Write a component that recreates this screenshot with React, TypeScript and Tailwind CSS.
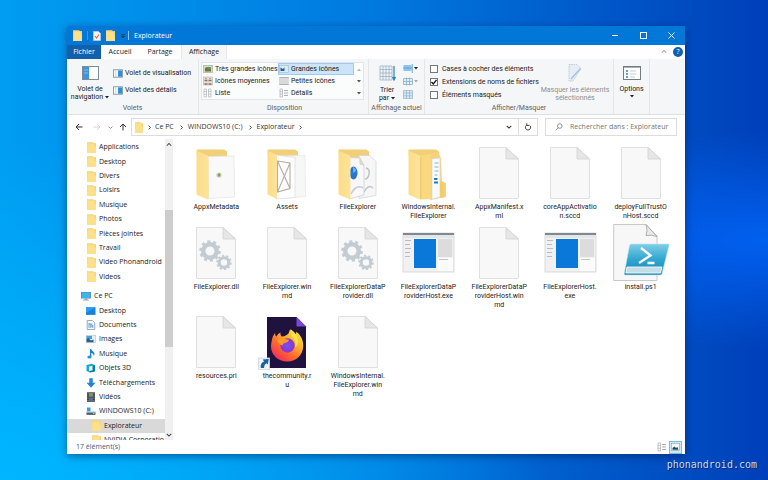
import React from "react";

type IconProps = { className?: string };

/* ---------- small icons ---------- */

const MiniFolder = ({ className = "h-[11px] w-[9px]" }: IconProps) => (
  <svg viewBox="0 0 9 11" className={`shrink-0 ${className}`} preserveAspectRatio="none" aria-hidden="true">
    <path d="M0 .3h6l1 1h2v9.700H0z" fill="#f3d479" />
    <path d="M.5 1.500h8.500v9.500H0z" fill="#fde08a" />
    <path d="M7.600 1.300h1.100v4h-1.100z" fill="#f7cf68" />
  </svg>
);

const Chevron = ({ dir, className = "size-[5px]" }: IconProps & { dir: "up" | "down" | "right" }) => {
  const d = { up: "M1 5l3-3 3 3", down: "M1 2.5l3 3 3-3", right: "M2.5 1l3 3-3 3" }[dir];
  return (
    <svg viewBox="0 0 8 8" className={`shrink-0 ${className}`} fill="none" stroke="currentColor" strokeWidth="1.4" aria-hidden="true">
      <path d={d} />
    </svg>
  );
};

const Caret = ({ className = "" }: IconProps) => (
  <svg viewBox="0 0 4 3" className={`h-[3px] w-1 shrink-0 ${className}`} aria-hidden="true">
    <path d="M0 0h4L2 2.6z" fill="currentColor" />
  </svg>
);

const PaneIcon = () => (
  <svg viewBox="0 0 10 9" className="h-[9px] w-[10px] shrink-0" aria-hidden="true">
    <rect x=".5" y=".8" width="9" height="7.4" fill="#fff" stroke="#6f8ba0" strokeWidth=".8" />
    <rect x="5" y="1.4" width="4" height="6.3" fill="#2f8fdc" />
    <path d="M2.8 1.2v6.6" stroke="#9fb4c3" strokeWidth=".6" />
  </svg>
);

type ViewKind = "xl" | "large" | "medium" | "small" | "list" | "details";

const ViewIcon = ({ kind }: { kind: ViewKind }) => (
  <svg viewBox="0 0 10 10" className="size-[10px] shrink-0" aria-hidden="true">
    {kind === "xl" && (
      <>
        <rect x=".5" y="1.5" width="9" height="7" fill="#d3dcc0" stroke="#aab0a6" strokeWidth=".7" />
        <path d="M2 7.5V4l2-1 2 1 2-1v4.500z" fill="#7d7238" />
        <path d="M5 3h3v2H5z" fill="#4c9a86" />
      </>
    )}
    {kind === "large" && (
      <>
        <rect x=".5" y="1.500" width="9" height="7" fill="#d9e9f7" stroke="#9cb9d2" strokeWidth=".6" />
        <path d="M1.500 7V3.500l2.400 1.500L5.500 3.500V7z" fill="#2f5f88" />
      </>
    )}
    {kind === "medium" && (
      <>
        <rect x=".5" y="1" width="9" height="8" fill="#e8e1dc" stroke="#b8b0aa" strokeWidth=".6" />
        <path d="M1.500 4.500h3M5.500 4.500h3M1.500 8h3M5.500 8h3" stroke="#8d7468" strokeWidth="1.400" />
        <path d="M2 2.600h2M6 2.600h2" stroke="#c79a75" />
      </>
    )}
    {kind === "small" && <path d="M1 1v8M3 1v8M5 1v8M7 1v8M9 1v8M.5 1.500h9M.5 8.500h9" stroke="#a5a5a5" strokeWidth=".8" />}
    {kind === "list" && (
      <path d="M1 1h2.500v8H1zM5.500 1H8v8H5.500zM1 3.500h2.500M1 6.200h2.500M5.500 3.500H8M5.500 6.200H8" fill="none" stroke="#b0b4b8" strokeWidth=".7" />
    )}
    {kind === "details" && (
      <>
        <path d="M1 1h2.500v8H1zM1 3.600h2.500M1 6.200h2.500" fill="none" stroke="#a9adb2" strokeWidth=".7" />
        <path d="M5 2.500h4M5 5h4M5 7.500h4" stroke="#999" strokeWidth=".8" />
      </>
    )}
  </svg>
);

const TreeIcon = ({ kind }: { kind: string }) => (
  <svg viewBox="0 0 10 10" className="size-[10px] shrink-0" aria-hidden="true">
    {kind === "pc" && (
      <>
        <rect x="0" y="1" width="10" height="6.500" fill="#5a8fb4" />
        <rect x=".7" y="1.600" width="8.600" height="5.300" fill="#3db4f0" />
        <path d="M3.500 7.500h3v1.200H8V9.500H2v-.8h1.500z" fill="#8ba6b8" />
      </>
    )}
    {kind === "desktop" && (
      <>
        <rect y="1.300" width="9.500" height="7.600" fill="#1583dd" />
        <path d="M0 1.300h9.500L0 7z" fill="#2c9cf0" />
      </>
    )}
    {kind === "doc" && (
      <>
        <path d="M1.200.5H6.500L8.800 2.800V9.500H1.200z" fill="#f5fafd" stroke="#7f99ab" strokeWidth=".8" />
        <path d="M3 3v5M4.800 4v4M3 4h3.500M4.500 6h2.500M6.800 5v3" stroke="#4b91c5" strokeWidth=".8" />
      </>
    )}
    {kind === "image" && (
      <>
        <rect x=".2" y="1.400" width="9.600" height="7.200" fill="#e5f1f8" stroke="#a3b5c2" strokeWidth=".5" />
        <path d="M.5 2h5.500v3H.5z" fill="#4a9fdc" />
        <path d="M.5 8.300V5l2-1 2.500 2.500L7.500 5.500V8.300z" fill="#2d5f94" />
      </>
    )}
    {kind === "music" && (
      <>
        <path d="M4 0h1.200c.3 2 3.300 2.600 3.300 4.800 0 1-.6 1.800-1 2 .3-1.800-1-2.400-2.200-2.800V8H4z" fill="#1483d6" />
        <ellipse cx="3.400" cy="8" rx="2.100" ry="1.600" fill="#1e94e6" />
      </>
    )}
    {kind === "cube" && (
      <>
        <path d="M.5 2L6 .8l3 1.500v5.900L4 9.500.5 8z" fill="#18a8cf" />
        <path d="M4 3.300l5-1v5.900L4 9.500z" fill="#0a7aa6" />
        <path d="M3 3.500l3.500-.8v4.500L3 8z" fill="#e8fbff" />
      </>
    )}
    {kind === "download" && <path d="M3.300.3h3.400v4.500H9.500L5 9.700.5 4.800h2.800z" fill="#2583d8" />}
    {kind === "video" && (
      <>
        <rect x="1" y=".3" width="8" height="9.500" fill="#35393e" />
        <path d="M3 1h4v3.800H3z" fill="#7e8d72" />
        <path d="M3 5.400h4V9.200H3z" fill="#52708c" />
        <path d="M2 .8v8.600M8 .8v8.600" stroke="#c9cdd1" strokeWidth=".7" strokeDasharray="1 .8" />
      </>
    )}
    {kind === "drive" && (
      <>
        <path d="M.5 6.300h9v2.600h-9z" fill="#4e5f6b" />
        <path d="M.5 5.500h9l.2 1H.3z" fill="#a9bac5" />
        <path d="M1 1.500h3.500v3.800H1z" fill="#28a4e8" />
        <path d="M7 7.500h1.500" stroke="#6fe0a0" />
      </>
    )}
  </svg>
);

/* ---------- large file icons, 56 x 53 canvas ---------- */

const Sheet = () => (
  <>
    <path d="M8.500.5H35L47.500 12V51.500h-39z" fill="#f8f8f8" stroke="#e0e0e0" />
    <path d="M35 .5V12h12.500z" fill="#e6e6e6" stroke="#d2d2d2" strokeWidth=".8" />
  </>
);

const FolderBack = () => <path d="M8.500 3.500Q8.500 2.500 9.500 2.500H36l3 2v44H12z" fill="#f0cf78" />;

const FolderFlap = () => (
  <path d="M8.500 3.500L19.500 8.500Q20.500 9 20.500 10V51.500Q20.500 53 19 52.300L9.500 48Q8.500 47.500 8.500 46.500z" fill="url(#flap)" />
);

const Gear = ({ cx, cy, r }: { cx: number; cy: number; r: number }) => (
  <g transform={`translate(${cx} ${cy})`}>
    <circle r={r * 0.64} fill="none" stroke="#c3ccd2" strokeWidth={r * 0.42} />
    <circle r={r * 0.9} fill="none" stroke="#c3ccd2" strokeWidth={r * 0.26} strokeDasharray={`${r * 0.2827} ${r * 0.2827}`} />
  </g>
);

const AppWindow = () => (
  <>
    <rect x="3" y="6" width="51" height="39" fill="#f1f1f1" stroke="#d0d3d5" strokeWidth=".8" />
    <rect x="3" y="6" width="51" height="2" fill="#7e8a92" />
    <rect x="3" y="8" width="51" height="3" fill="#e3e5e6" />
    <path d="M5 13.500h6M5 17.500h5M5 21.500h6M5 25.500h5M5 29.500h5" stroke="#b9bdc0" strokeWidth="1.200" />
    <rect x="14" y="12" width="22" height="29" fill="#0a78d8" />
    <rect x="38" y="12" width="14" height="18" fill="#dcdcdc" />
    <rect x="38" y="31" width="15" height="13" fill="#fbfbfb" />
    <path d="M39 32.500h9" stroke="#b8b8b8" strokeWidth=".8" />
  </>
);

const FileArt = ({ kind }: { kind: string }) => (
  <svg viewBox="0 0 56 53" className="h-[53px] w-14 shrink-0 overflow-visible" aria-hidden="true">
    <defs>
      <linearGradient id="flap" x1="0" x2="1">
        <stop offset="0" stopColor="#fbdc88" />
        <stop offset="1" stopColor="#fde49c" />
      </linearGradient>
      <linearGradient id="shell" x1="0" y1="0" x2="0" y2="1">
        <stop offset="0" stopColor="#7ecfe8" />
        <stop offset=".5" stopColor="#2fa6cf" />
        <stop offset="1" stopColor="#1485b4" />
      </linearGradient>
      <linearGradient id="flame" x1="1" y1="0" x2=".2" y2="1">
        <stop offset="0" stopColor="#fff04a" />
        <stop offset=".35" stopColor="#ffbd2e" />
        <stop offset=".65" stopColor="#ff6d2c" />
        <stop offset="1" stopColor="#f5245f" />
      </linearGradient>
      <radialGradient id="globe">
        <stop offset="0" stopColor="#7a4dff" />
        <stop offset="1" stopColor="#8a36c8" />
      </radialGradient>
    </defs>
    {kind === "page" && <Sheet />}
    {kind === "gears" && (
      <>
        <Sheet />
        <Gear cx={22} cy={24} r={10.500} />
        <Gear cx={36} cy={35.500} r={7.500} />
      </>
    )}
    {kind === "folder-page" && (
      <>
        <FolderBack />
        <path d="M20 9.500l26-.5.500 41-26 1.500z" fill="#f9f9f9" stroke="#e4e4e4" strokeWidth=".8" />
        <circle cx="31" cy="28" r="2.600" fill="#c9d3b0" />
        <path d="M29.500 28l2-2 1 2-1.500 2z" fill="#7e9a5d" />
        <FolderFlap />
      </>
    )}
    {kind === "folder-mail" && (
      <>
        <FolderBack />
        <path d="M23 9l23-.5.500 41-24 2z" fill="#f7f7f7" stroke="#e8e8e8" strokeWidth=".8" />
        <path d="M17 8l19 2.500v40L17 52z" fill="#fdfdfd" stroke="#e0e0e0" strokeWidth=".8" />
        <path d="M18.500 14l12.500 2v25.500L18.500 45zM18.500 14L31 41.500M31 16L18.500 45" fill="none" stroke="#b5aea5" strokeWidth="1.100" />
        <path d="M8.500 3.500L17.500 8q.5.500.5 1.500V52L9.500 48Q8.500 47.500 8.500 46.500z" fill="url(#flap)" />
      </>
    )}
    {kind === "folder-docs" && (
      <>
        <FolderBack />
        <path d="M29 8.500h11l6 6v34l-17 3z" fill="#f6f6f6" stroke="#d6d6d6" strokeWidth=".8" />
        <path d="M36 21q4 1 3 6t-4 5M34 45q4-8 9-4" fill="none" stroke="#b9c3cb" strokeWidth="1.400" />
        <path d="M19.500 10.500L30 11l4 7v30l-14.500 4z" fill="#f8f8f8" stroke="#cfcfcf" strokeWidth=".8" />
        <path d="M30 11v6l4 1" fill="#ddd" stroke="#c4c4c4" strokeWidth=".7" />
        <ellipse cx="23.500" cy="26" rx="4" ry="6.500" fill="#2476cf" />
        <path d="M23 20q3 1 3 4l-3 2z" fill="#6fb0ee" />
        <path d="M21 47q5-10 12-6" fill="none" stroke="#c9cdd0" strokeWidth="1.500" />
        <FolderFlap />
      </>
    )}
    {kind === "folder-full" && (
      <>
        <FolderBack />
        <path d="M30 7l8-3 3 8 1 24h4v14l-16 3z" fill="#f6d27c" />
        <path d="M32 12l8-1v39l-8 2z" fill="#f7fafc" stroke="#d3dbe0" strokeWidth=".7" />
        <path d="M34.500 16h4M34.500 20h4M34.500 24h4M34.500 28h3" stroke="#8fb6cc" strokeWidth="1.200" />
        <path d="M34 32h3.500M34 35.500h4" stroke="#1d7fae" strokeWidth="2.200" />
        <path d="M40 34l4.500 1v15l-4.500 1z" fill="#f4cc6c" />
        <path d="M20 8.500l11-1.500v45l-11 .5z" fill="#f9d87f" />
        <FolderFlap />
        <path d="M20.800 10v42" stroke="#e5bd62" strokeWidth=".8" />
      </>
    )}
    {kind === "exe" && <AppWindow />}
    {kind === "ps" && (
      <>
        <path d="M.7-2.500H33L44 9V53.500H.7z" fill="#f7f7f7" stroke="#c8c8c8" />
        <path d="M33-2.500q2 6 0 11 6-1 11 1z" fill="#e9e9e9" stroke="#9f9f9f" strokeWidth=".8" />
        <path d="M18 17h37q1.500 0 1 1.500L49 46.500q-.5 1.500-2 1.500H12.500q-1.500 0-1.200-1.500L16.500 18.500Q17 17 18 17z" fill="url(#shell)" stroke="#b9e2ef" strokeWidth=".6" />
        <path d="M14 40h35l-1.500 6H12.800z" fill="#c5dde6" stroke="#f1fafc" strokeWidth=".9" />
        <path d="M28 21l9.500 7.500L26 36M34.500 36h7" fill="none" stroke="#fff" strokeWidth="2.300" />
      </>
    )}
    {kind === "firefox" && (
      <>
        <path d="M8 1h29.500L47 10.500V52H8z" fill="#20123f" />
        <path d="M37.500 1v9.500H47z" fill="#7d45d8" />
        <path d="M12.500 26c.5-4 1.800-7 3.500-9 .1 1.800.6 3 1.400 3.800 1-2.300 2.400-3.500 4.100-4.300-.3 1.600.2 3 1.200 3.900 3 .1 5.300-1.400 7-3.200.7-1.300.6-3.200 1.800-4 .6 2.400 2 3.300 4 5 1.500.3 1.900-1 1.700-2.400 4.600 3.200 7.300 8.400 7 14.800C43.700 40 36.600 45.500 28.300 45.500 18.800 45.500 12 38.600 12 30.500c0-1.600.2-3.100.5-4.500z" fill="url(#flame)" />
        <circle cx="28.500" cy="29.500" r="7.200" fill="url(#globe)" />
        <path d="M18 23.500q4-2.500 7.500-.5l4.500.8q-.7 2.700-4.200 3.200-2.600.6-2 2.600-4.300-.5-5.800-6.100z" fill="#ff9a2a" />
        <path d="M32 13.500q-1.200 5 2 8.500 3.800 4 2 9.500 3-2 3-7-1-7-7-11z" fill="#ffe14a" />
        <rect x="-.5" y="42" width="11" height="11.500" fill="#eef5fa" stroke="#d0d8de" strokeWidth=".8" />
        <path d="M1.800 52q-.8-5 3.200-6.500L3.800 43.500l6-.5-1 5.500-1.400-1.200Q5 48.500 5 52z" fill="#1d5fa5" />
      </>
    )}
  </svg>
);

/* ---------- data ---------- */

const quickFolders = [
  "Applications", "Desktop", "Divers", "Loisirs", "Musique",
  "Photos", "Pièces jointes", "Travail", "Video Phonandroid", "Videos",
];

const pcItems: [string, string][] = [
  ["desktop", "Desktop"],
  ["doc", "Documents"],
  ["image", "Images"],
  ["music", "Musique"],
  ["cube", "Objets 3D"],
  ["download", "Téléchargements"],
  ["video", "Vidéos"],
  ["drive", "WINDOWS10 (C:)"],
];

const files: { art: string; lines: string[] }[] = [
  { art: "folder-page", lines: ["AppxMetadata"] },
  { art: "folder-mail", lines: ["Assets"] },
  { art: "folder-docs", lines: ["FileExplorer"] },
  { art: "folder-full", lines: ["WindowsInternal.", "FileExplorer"] },
  { art: "page", lines: ["AppxManifest.x", "ml"] },
  { art: "page", lines: ["coreAppActivatio", "n.sccd"] },
  { art: "page", lines: ["deployFullTrustO", "nHost.sccd"] },
  { art: "gears", lines: ["FileExplorer.dll"] },
  { art: "page", lines: ["FileExplorer.win", "md"] },
  { art: "gears", lines: ["FileExplorerDataP", "rovider.dll"] },
  { art: "exe", lines: ["FileExplorerDataP", "roviderHost.exe"] },
  { art: "page", lines: ["FileExplorerDataP", "roviderHost.win", "md"] },
  { art: "exe", lines: ["FileExplorerHost.", "exe"] },
  { art: "ps", lines: ["install.ps1"] },
  { art: "page", lines: ["resources.pri"] },
  { art: "firefox", lines: ["thecommunity.r", "u"] },
  { art: "page", lines: ["WindowsInternal.", "FileExplorer.win", "md"] },
];

const views: [ViewKind, string][] = [
  ["xl", "Très grandes icônes"],
  ["large", "Grandes icônes"],
  ["medium", "Icônes moyennes"],
  ["small", "Petites icônes"],
  ["list", "Liste"],
  ["details", "Détails"],
];

/* ---------- window parts ---------- */

const TitleBar = () => (
  <header className="flex h-[19px] items-center bg-[#0178d7] pl-[6px] text-white">
    <MiniFolder />
    <span className="ml-[5px] h-[9px] w-px bg-[#3b97e2]" />
    <svg viewBox="0 0 8 10" className="ml-[5px] h-[10px] w-2" aria-hidden="true">
      <path d="M.5.5h5l2 2v7h-7z" fill="#f7f3f3" stroke="#cbd5de" strokeWidth=".6" />
      <path d="M2 5l1.500 2L6 3.500" fill="none" stroke="#e2625c" strokeWidth="1.100" />
    </svg>
    <MiniFolder className="ml-[5px] h-[11px] w-[9px]" />
    <svg viewBox="0 0 6 6" className="ml-[5px] size-[6px]" aria-hidden="true">
      <path d="M1 1.500h4M1.500 3l1.500 2 1.500-2z" stroke="#123f6b" strokeWidth=".8" fill="#123f6b" />
    </svg>
    <span className="ml-[2px] h-[9px] w-px bg-[#8cc4ef]" />
    <h1 className="ml-[5px] text-[7px] leading-[10px]">Explorateur</h1>
    <div className="ml-auto flex">
      <button aria-label="Réduire" className="flex h-[19px] w-7 items-center justify-center">
        <span className="h-px w-[6px] bg-white" />
      </button>
      <button aria-label="Agrandir" className="flex h-[19px] w-7 items-center justify-center">
        <span className="size-[7px] border border-white" />
      </button>
      <button aria-label="Fermer" className="flex h-[19px] w-7 items-center justify-center">
        <svg viewBox="0 0 7 7" className="size-[7px]" stroke="#fff" strokeWidth="1"><path d="M.5.5l6 6M6.500.5l-6 6" /></svg>
      </button>
    </div>
  </header>
);

const Tabs = () => (
  <nav className="flex h-[14px] items-stretch bg-white leading-[14px]">
    <button className="w-[34px] bg-[#1160ab] text-white">Fichier</button>
    <button className="w-[38px]">Accueil</button>
    <button className="w-[42px]">Partage</button>
    <button className="w-[46px] border-x border-[#e6e8ea] bg-[#f5f6f7]">Affichage</button>
    <div className="ml-auto flex items-center gap-[6px] pr-[2px]">
      <button aria-label="Réduire le ruban" className="text-[#9aa0a6]"><Chevron dir="up" className="size-[6px]" /></button>
      <button aria-label="Aide" className="flex size-[10px] items-center justify-center rounded-full bg-[#0f5fb2] text-[7px] leading-[10px] text-white">?</button>
    </div>
  </nav>
);

const Group = ({ title, className, children }: { title: string; className: string; children: React.ReactNode }) => (
  <section className={`flex flex-col border-r border-[#e4e6e8] ${className}`}>
    <div className="flex flex-1">{children}</div>
    <h2 className="h-[11px] text-center leading-[10px] text-[#5c6166]">{title}</h2>
  </section>
);

const Check = ({ label, checked }: { label: string; checked?: boolean }) => (
  <label className="flex h-[13px] items-center gap-[4px] whitespace-nowrap">
    <span className="relative flex size-2 shrink-0">
      <input type="checkbox" defaultChecked={checked} className="peer size-2 appearance-none border border-[#777] bg-white" />
      <svg viewBox="0 0 8 8" className="pointer-events-none absolute inset-0 hidden size-2 peer-checked:block" fill="none" stroke="#111" strokeWidth="1.300" aria-hidden="true">
        <path d="M1.500 4l1.800 2L6.500 1.800" />
      </svg>
    </span>
    {label}
  </label>
);

const Ribbon = () => (
  <div className="flex h-14 border-b border-[#dfe1e3] bg-[#f5f6f7] font-[Roboto,'Open_Sans',sans-serif]">
    <Group title="Volets" className="w-[132px]">
      <button className="flex w-[46px] flex-col items-center pt-[7px] leading-[8px]">
        <svg viewBox="0 0 17 14" className="mb-[5px] h-[14px] w-[17px]" aria-hidden="true">
          <rect x=".5" y=".5" width="16" height="13" fill="#fff" stroke="#7e8c96" />
          <rect x="1" y="1" width="6" height="12" fill="#3d94e0" />
          <path d="M2 4h4M2 7h4" stroke="#7fc0f2" />
        </svg>
        <span>Volet de</span>
        <span className="flex items-center gap-[2px]">navigation<Caret /></span>
      </button>
      <div className="flex flex-col gap-[5px] pt-[8px]">
        <button className="flex h-[12px] items-center gap-[2px] whitespace-nowrap"><PaneIcon />Volet de visualisation</button>
        <button className="flex h-[12px] items-center gap-[2px] whitespace-nowrap"><PaneIcon />Volet des détails</button>
      </div>
    </Group>
    <Group title="Disposition" className="w-[170px] pl-[2px]">
      <div className="mt-[3px] flex h-[38px] w-[163px] border border-[#e2e4e6] bg-[#fbfcfc]">
        <div className="grid flex-1 grid-cols-[76px_1fr] grid-rows-3">
          {views.map(([kind, label]) => (
            <button
              key={kind}
              className={`flex items-center gap-[2px] border whitespace-nowrap ${kind === "large" ? "border-[#9ccbf2] bg-[#cce4f7]" : "border-transparent"}`}
            >
              <ViewIcon kind={kind} />
              {label}
            </button>
          ))}
        </div>
        <div className="flex w-[9px] flex-col items-center justify-around text-[#555]">
          <button aria-label="Précédent" className="text-[#b5b5b5]"><Caret className="rotate-180" /></button>
          <button aria-label="Suivant"><Caret /></button>
          <button aria-label="Plus"><Caret /></button>
        </div>
      </div>
    </Group>
    <Group title="Affichage actuel" className="w-14 whitespace-nowrap">
      <button className="flex w-9 flex-col items-center pt-[6px] leading-[8px]">
        <svg viewBox="0 0 17 16" className="mb-[5px] h-4 w-[17px]" aria-hidden="true">
          <path d="M1 1h12v14H1zM1 4.500h12M1 8h12M1 11.500h12M4 1v14M7 1v14M10 1v14" fill="#eef4f8" stroke="#9fb3c1" strokeWidth=".8" />
          <path d="M15 1v12M13.500 12l1.500 3 1.500-3" stroke="#2d7fc4" fill="#2d7fc4" strokeWidth="1.200" />
        </svg>
        <span>Trier</span>
        <span className="flex items-center gap-[2px]">par<Caret /></span>
      </button>
      <div className="-ml-[2px] flex flex-col gap-[4px] pt-[5px]">
        <button aria-label="Regrouper par" className="flex items-center gap-[1px]">
          <svg viewBox="0 0 10 9" className="h-[9px] w-[10px]"><path d="M.5 1h8v6h-8z" fill="#8fc4ee" /><path d="M0 4h9M9.300 0v9" stroke="#5a9ad0" strokeWidth=".8" /></svg>
          <Caret />
        </button>
        <button aria-label="Ajouter des colonnes" className="flex items-center gap-[1px]">
          <svg viewBox="0 0 10 9" className="h-[9px] w-[10px]" fill="#e4eff8" stroke="#8aaecb" strokeWidth=".8"><path d="M.5 1.500h9v6h-9zM3.500.5v8M6.500.5v8M.5 4.500h9" /></svg>
          <span className="text-[#aaa]"><Caret /></span>
        </button>
        <button aria-label="Ajuster les colonnes">
          <svg viewBox="0 0 10 9" className="h-[9px] w-[10px]" fill="#d9e9f5" stroke="#9bb8cf" strokeWidth=".8"><path d="M.5.500h9v8h-9zM3.500.5v8M6.500.5v8M.5 3h9M.5 5.800h9" /></svg>
        </button>
      </div>
    </Group>
    <Group title="Afficher/Masquer" className="w-[189px]">
      <div className="flex w-[114px] flex-col pt-[3px] pl-[5px]">
        <Check label="Cases à cocher des éléments" />
        <Check label="Extensions de noms de fichiers" checked />
        <Check label="Éléments masqués" />
      </div>
      <button className="flex w-[72px] flex-col items-center pt-[5px] leading-[8px] whitespace-nowrap text-[#8b9094]">
        <svg viewBox="0 0 14 18" className="mb-[4px] h-[18px] w-[14px]" aria-hidden="true">
          <path d="M1 .5h8l4 4L5 17H1z" fill="#e6edf4" stroke="#b5c3d1" strokeWidth=".8" strokeDasharray="1.500 .8" />
          <path d="M3 15L12.500 4.500" stroke="#a9bfdc" strokeWidth="1.300" />
        </svg>
        <span>Masquer les éléments</span>
        <span>sélectionnés</span>
      </button>
    </Group>
    <Group title="" className="w-9">
      <button className="flex flex-1 flex-col items-center pt-[7px] leading-[8px]">
        <svg viewBox="0 0 18 14" className="mb-[5px] h-[14px] w-[18px]" aria-hidden="true">
          <rect x=".5" y=".5" width="17" height="13" fill="#fff" stroke="#737b81" />
          <path d="M1 1.500h16" stroke="#aab0b5" />
          <path d="M3 5h2M3 8h2M3 11h2" stroke="#2f7fc6" strokeWidth="1.400" />
          <path d="M7 5h6M7 8h6M7 11h5" stroke="#c5cacd" />
        </svg>
        <span>Options</span>
        <Caret className="mt-[2px]" />
      </button>
    </Group>
  </div>
);

const Arrow = ({ d }: { d: string }) => (
  <svg viewBox="0 0 8 8" className="size-2" fill="none" stroke="currentColor" strokeWidth="1" aria-hidden="true"><path d={d} /></svg>
);

const AddressBar = () => (
  <div className="flex h-6 items-center bg-white pr-2 pl-2 text-[#333]">
    <button aria-label="Précédent"><Arrow d="M7.500 4H1M4 1L1 4l3 3" /></button>
    <button aria-label="Suivant" className="ml-[10px] text-[#d4d4d4]"><Arrow d="M.5 4H7M4 1l3 3-3 3" /></button>
    <button aria-label="Récents" className="ml-[7px] text-[#777]"><Chevron dir="down" className="size-[5px]" /></button>
    <button aria-label="Dossier parent" className="ml-[6px]"><Arrow d="M4 7.500V1M1 4l3-3 3 3" /></button>
    <div className="ml-[4px] flex h-[18px] flex-1 items-center border border-[#dcdcdc] pl-[3px]">
      <MiniFolder className="h-[11px] w-[8px]" />
      <span className="ml-[4px]"><Chevron dir="right" /></span>
      <a href="#pc" className="ml-[3px]">Ce PC</a>
      <span className="ml-[5px]"><Chevron dir="right" /></span>
      <a href="#c" className="ml-[4px]">WINDOWS10 (C:)</a>
      <span className="ml-[5px]"><Chevron dir="right" /></span>
      <a href="#explorateur" className="ml-[4px]">Explorateur</a>
      <span className="ml-[3px]"><Chevron dir="right" /></span>
      <button aria-label="Historique" className="mr-[6px] ml-auto"><Chevron dir="down" className="size-[6px]" /></button>
      <button aria-label="Actualiser" className="flex h-full w-[19px] items-center justify-center border-l border-[#dcdcdc]">
        <svg viewBox="0 0 8 8" className="size-2" fill="none" stroke="#444" strokeWidth="1"><path d="M3 2a2.600 2.600 0 1 0 2.400.2M2.800.3V2.400h2.200" /></svg>
      </button>
    </div>
    <label className="ml-[7px] flex h-[18px] w-[132px] items-center border border-[#dcdcdc] pl-[9px]">
      <svg viewBox="0 0 8 8" className="size-2 shrink-0" fill="none" stroke="#777" strokeWidth=".8" aria-label="Rechercher"><circle cx="4.800" cy="3" r="2.300" /><path d="M3.200 4.700L.8 7.300" /></svg>
      <input placeholder="Rechercher dans : Explorateur" className="ml-[7px] w-full min-w-0 bg-transparent outline-none placeholder:text-[#757575]" />
    </label>
  </div>
);

const Sidebar = () => (
  <aside className="flex w-[106px] shrink-0 overflow-hidden">
    <div className="w-[98px] overflow-hidden whitespace-nowrap">
      <ul className="flex h-[145px] flex-col pt-px pl-5">
        {quickFolders.map((name) => (
          <li key={name} className="flex flex-1 items-center gap-[3px]"><MiniFolder />{name}</li>
        ))}
      </ul>
      <ul className="mt-[5px] flex h-[151px] flex-col">
        <li className="flex flex-1 items-center gap-[3px] pl-[14px]"><TreeIcon kind="pc" />Ce PC</li>
        {pcItems.map(([kind, name]) => (
          <li key={name} className="flex flex-1 items-center gap-[3px] pl-[19px]"><TreeIcon kind={kind} />{name}</li>
        ))}
        <li className="flex flex-1 items-center gap-[3px] bg-[#d9d9d9] pl-[25px]"><MiniFolder />Explorateur</li>
        <li className="flex h-[7px] items-start gap-[3px] overflow-hidden pt-[2px] pl-[25px]"><MiniFolder />NVIDIA Corporatio</li>
      </ul>
    </div>
    <div className="flex w-2 flex-col items-center bg-[#f0f0f0] text-[#444]">
      <Chevron dir="up" className="mt-[3px] size-[6px]" />
      <div className="mt-[62px] h-[137px] w-full bg-[#cdcdcd]" />
      <Chevron dir="down" className="mt-auto mb-[2px] size-[6px]" />
    </div>
  </aside>
);

const FileGrid = () => (
  <main className="grid flex-1 grid-cols-7 content-start gap-y-[6px] pt-2 pr-[9px] pl-2 font-[Roboto,'Open_Sans',sans-serif]">
    {files.map(({ art, lines }) => (
      <figure key={lines.join("")} className="flex flex-col items-center">
        <FileArt kind={art} />
        <figcaption className="flex flex-col items-center pt-[3px] leading-[9px] whitespace-nowrap">
          {lines.map((line) => <span key={line}>{line}</span>)}
        </figcaption>
      </figure>
    ))}
  </main>
);

const StatusBar = () => (
  <footer className="flex h-[14px] items-center bg-white pl-[9px] text-[#3f5c7c]">
    <span>17 élément(s)</span>
    <div className="ml-auto flex items-center gap-px pr-[3px]">
      <button aria-label="Détails" className="flex h-[13px] w-3 items-center justify-center"><ViewIcon kind="details" /></button>
      <button aria-label="Grandes icônes" className="flex h-[13px] w-[13px] items-center justify-center border border-[#6fc0e8] bg-[#cbe9f8]">
        <svg viewBox="0 0 9 8" className="h-2 w-[9px]"><rect x=".5" y=".5" width="8" height="7" fill="#f5fafc" stroke="#8ba1ae" strokeWidth=".6" /><path d="M1.500 6.800V5l2-1.500L5 5l1.500-1L7.500 6.800z" fill="#29485c" /></svg>
      </button>
    </div>
  </footer>
);

export default function App() {
  return (
    <div className="flex min-h-screen flex-col bg-[radial-gradient(ellipse_at_100%_50%,#0160f0_0%,transparent_32%),radial-gradient(ellipse_at_0%_100%,#00b6ff_0%,transparent_50%),linear-gradient(to_right,#009df2_0%,#0078de_50%,#003fb9_100%)] pt-[26px] pr-[83px] pl-[67px] font-['Open_Sans','Noto_Sans',sans-serif] text-[7px] leading-[10px] text-[#222]">
      <div className="bg-white shadow-[0_2px_8px_rgba(0,20,70,0.5)]">
        <TitleBar />
        <Tabs />
        <Ribbon />
        <AddressBar />
        <div className="flex h-[301px] overflow-hidden bg-white">
          <Sidebar />
          <FileGrid />
        </div>
        <StatusBar />
      </div>
      <p className="mt-[5px] -mr-[72px] self-end font-['DejaVu_Sans_Mono',monospace] text-[10px] leading-3 text-[#c5dcf7] [text-shadow:1px_1px_0_#022a6e]">
        phonandroid.com
      </p>
    </div>
  );
}
